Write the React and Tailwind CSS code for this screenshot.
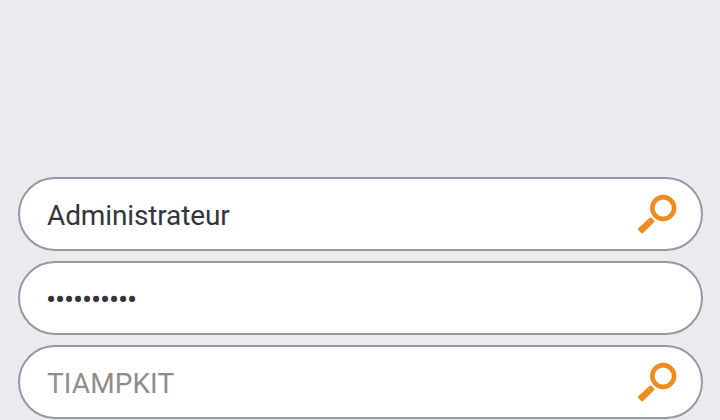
const fields = [
    { id: "user", text: "Administrateur", tone: "text-[#34353b] text-[28px] tracking-[-0.13px]", search: true },
    { id: "password", text: "••••••••••", tone: "text-[#34353b] text-[30px] tracking-[-1.12px] -ml-px", search: false },
    { id: "database", text: "TIAMPKIT", tone: "text-[#938c88] text-[28px] tracking-[0.1px]", search: true },
];

function SearchIcon() {
    return (
        <svg width="40" height="40" viewBox="0 0 40 40" fill="none" stroke="#f08c1e" aria-hidden="true">
            <circle cx="25.2" cy="14" r="10.9" strokeWidth="4.6" />
            <path
                d="M12.5 25.2 14.6 27.4 4.2 37.6 1.8 35.3Z"
                fill="#f08c1e"
                strokeWidth="3.4"
                strokeLinejoin="round"
            />
        </svg>
    );
}

function Field({ text, tone, search }) {
    return (
        <div className="flex h-[74px] shrink-0 items-center justify-between rounded-full border-2 border-[#9399a5] bg-white pl-[27px] pr-[23px]">
            <span className={`pt-1 leading-[40px] ${tone}`}>{text}</span>
            {search && <SearchIcon />}
        </div>
    );
}

export default function App() {
    return (
        <main className="h-[420px] overflow-hidden bg-[#eaebee] pl-[18px] pr-[17px] pt-[177px] font-['Roboto',sans-serif]">
            <div className="flex flex-col gap-2.5">
                {fields.map((f) => (
                    <Field key={f.id} text={f.text} tone={f.tone} search={f.search} />
                ))}
            </div>
        </main>
    );
}
